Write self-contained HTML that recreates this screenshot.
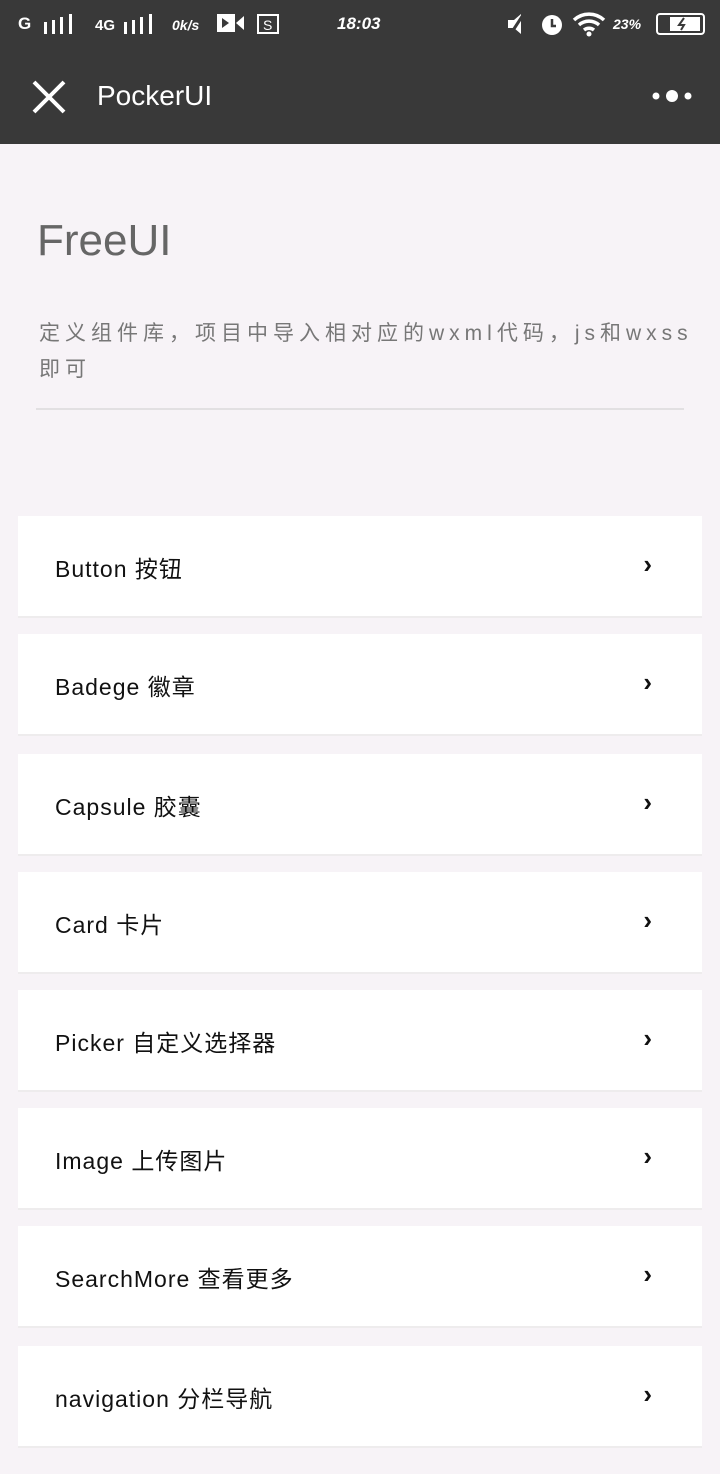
<!DOCTYPE html>
<html><head><meta charset="utf-8"><style>
*{margin:0;padding:0;box-sizing:border-box}
body{width:720px;height:1474px;background:#f7f3f7;font-family:"Liberation Sans","Noto Sans CJK SC",sans-serif;position:relative;overflow:hidden}
.top{position:absolute;left:0;top:0;width:720px;height:144px;background:#393939;color:#fff}
.sb{position:absolute;top:14px;font-size:17px;font-weight:bold}
.card{position:absolute;left:18px;width:684px;height:102px;background:#fff;border-bottom:2px solid #eeeced}
.card span{position:absolute;left:37px;top:34px;font-size:23px;color:#111;letter-spacing:1px}
.card b{position:absolute;right:50px;top:33px;font-size:26px;color:#111;font-weight:900}
</style></head><body>
<div class="top">
<div class="sb" style="left:18px">G</div>
<svg style="position:absolute;left:44px;top:14px" width="36" height="20"><rect x="0" y="8" width="3" height="12" fill="#fff"/><rect x="8" y="6" width="3" height="14" fill="#fff"/><rect x="16" y="3" width="3" height="17" fill="#fff"/><rect x="25" y="0" width="3" height="20" fill="#fff"/></svg>
<div class="sb" style="left:95px;font-size:15px;top:17px">4G</div>
<svg style="position:absolute;left:124px;top:14px" width="36" height="20"><rect x="0" y="8" width="3" height="12" fill="#fff"/><rect x="8" y="6" width="3" height="14" fill="#fff"/><rect x="16" y="3" width="3" height="17" fill="#fff"/><rect x="25" y="0" width="3" height="20" fill="#fff"/></svg>
<div class="sb" style="left:172px;font-size:14px;top:17px;font-style:italic">0k/s</div>
<svg style="position:absolute;left:217px;top:14px" width="28" height="18"><rect x="0" y="0" width="18" height="18" fill="#fff"/><polygon points="19,9 27,2 27,16" fill="#fff"/><polygon points="5,4 12,9 5,14" fill="#393939"/></svg>
<svg style="position:absolute;left:256px;top:13px" width="26" height="24"><rect x="2" y="2" width="20" height="18" fill="none" stroke="#fff" stroke-width="2"/><text x="7" y="17" fill="#fff" font-size="14" font-family="Liberation Sans">S</text></svg>
<div class="sb" style="left:337px;font-style:italic">18:03</div>
<svg style="position:absolute;left:506px;top:13px" width="20" height="22"><polygon points="2,7 8,7 15,1 15,21 8,15 2,15" fill="#fff"/><line x1="17" y1="2" x2="4" y2="22" stroke="#393939" stroke-width="3"/></svg>
<svg style="position:absolute;left:540px;top:12px" width="24" height="24"><circle cx="12" cy="13" r="10" fill="#fff"/><path d="M12 7v7h4" stroke="#393939" stroke-width="2.5" fill="none"/></svg>
<svg style="position:absolute;left:572px;top:11px" width="34" height="26"><path d="M2 9a22 22 0 0 1 30 0M7 14a15 15 0 0 1 20 0M12 19a8 8 0 0 1 10 0" stroke="#fff" stroke-width="3.5" fill="none"/><circle cx="17" cy="23" r="2.5" fill="#fff"/></svg>
<div class="sb" style="left:613px;font-size:14px;top:16px;font-style:italic">23%</div>
<svg style="position:absolute;left:652px;top:13px" width="54" height="22"><rect x="5" y="1" width="47" height="20" rx="3" fill="none" stroke="#fff" stroke-width="2"/><rect x="18" y="4" width="30" height="14" fill="#fff"/><path d="M32 5l-5 7h5l-3 5" stroke="#393939" stroke-width="2" fill="none"/></svg>
<svg style="position:absolute;left:32px;top:80px" width="34" height="34"><path d="M2 2L32 32M32 2L2 32" stroke="#fff" stroke-width="4"/></svg>
<div style="position:absolute;left:97px;top:80px;font-size:28px">PockerUI</div>
<svg style="position:absolute;left:652px;top:88px" width="42" height="16"><circle cx="4" cy="8" r="3.5" fill="#fff"/><circle cx="20" cy="8" r="6" fill="#fff"/><circle cx="36" cy="8" r="3.5" fill="#fff"/></svg>
</div>
<div style="position:absolute;left:37px;top:216px;font-size:44px;color:#666">FreeUI</div>
<div style="position:absolute;left:39px;top:316px;width:660px;font-size:21px;line-height:36px;color:#777;letter-spacing:5px">定义组件库，项目中导入相对应的wxml代码，js和wxss即可</div>
<div style="position:absolute;left:36px;top:408px;width:648px;height:2px;background:#e2e0e2"></div>
<div class="card" style="top:516px"><span>Button 按钮</span><b>›</b></div>
<div class="card" style="top:634px"><span>Badege 徽章</span><b>›</b></div>
<div class="card" style="top:754px"><span>Capsule 胶囊</span><b>›</b></div>
<div class="card" style="top:872px"><span>Card 卡片</span><b>›</b></div>
<div class="card" style="top:990px"><span>Picker 自定义选择器</span><b>›</b></div>
<div class="card" style="top:1108px"><span>Image 上传图片</span><b>›</b></div>
<div class="card" style="top:1226px"><span>SearchMore 查看更多</span><b>›</b></div>
<div class="card" style="top:1346px"><span>navigation 分栏导航</span><b>›</b></div>
</body></html>
